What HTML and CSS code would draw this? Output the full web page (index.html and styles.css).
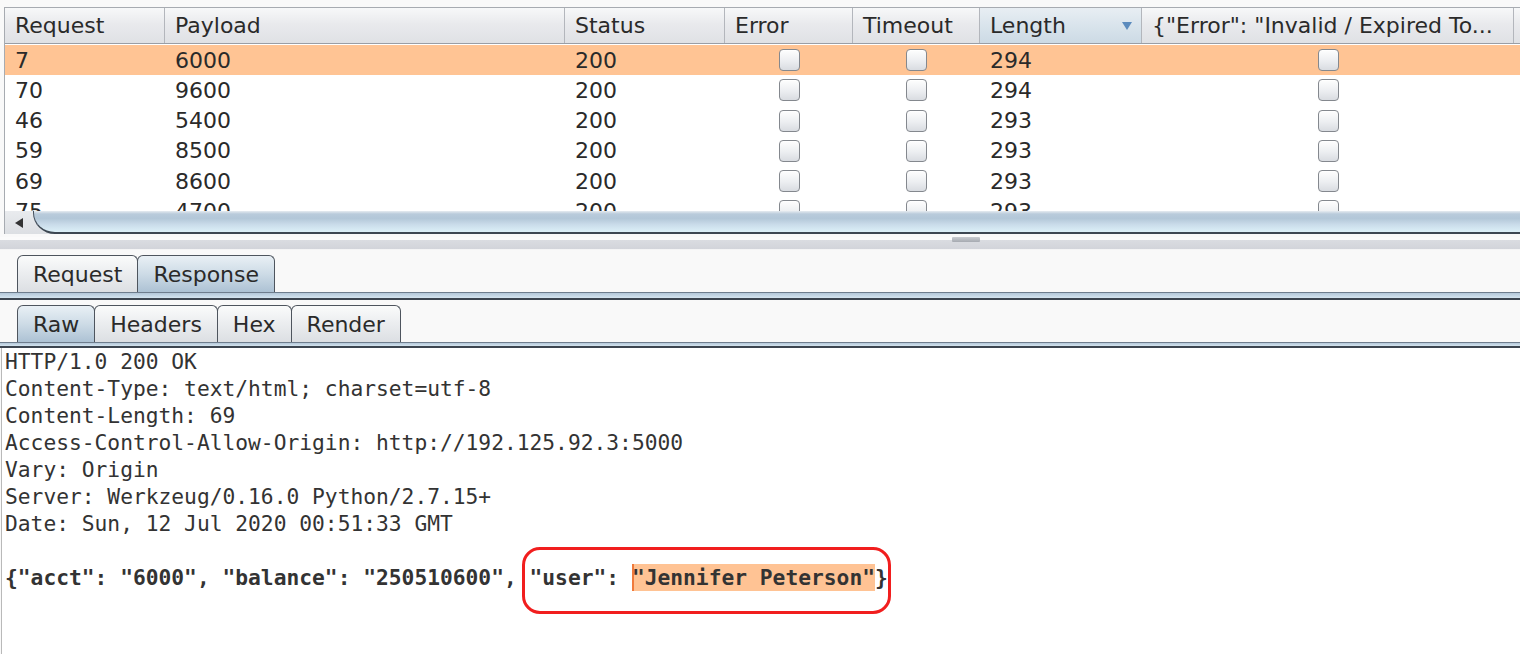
FILE: index.html
```html
<!DOCTYPE html>
<html>
<head>
<meta charset="utf-8">
<link rel="stylesheet" href="styles.css">
</head>
<body>
<div class="table-panel">
  <div class="grid-row thead">
    <div class="th">Request</div>
    <div class="th">Payload</div>
    <div class="th">Status</div>
    <div class="th">Error</div>
    <div class="th">Timeout</div>
    <div class="th sorted"><span>Length</span><svg class="sort" width="10" height="8" viewBox="0 0 10 8"><polygon points="0,0 10,0 5,8" fill="#5b8bbd"/></svg></div>
    <div class="th">{"Error": "Invalid / Expired To...</div>
    <div class="th"></div>
  </div>
  <div class="tbody">
    <div class="grid-row tr sel">
      <div class="td">7</div><div class="td">6000</div><div class="td">200</div>
      <div class="td chk"><span class="box"></span></div><div class="td chk"><span class="box"></span></div>
      <div class="td">294</div><div class="td chk"><span class="box"></span></div><div class="td"></div>
    </div>
    <div class="grid-row tr">
      <div class="td">70</div><div class="td">9600</div><div class="td">200</div>
      <div class="td chk"><span class="box"></span></div><div class="td chk"><span class="box"></span></div>
      <div class="td">294</div><div class="td chk"><span class="box"></span></div><div class="td"></div>
    </div>
    <div class="grid-row tr">
      <div class="td">46</div><div class="td">5400</div><div class="td">200</div>
      <div class="td chk"><span class="box"></span></div><div class="td chk"><span class="box"></span></div>
      <div class="td">293</div><div class="td chk"><span class="box"></span></div><div class="td"></div>
    </div>
    <div class="grid-row tr">
      <div class="td">59</div><div class="td">8500</div><div class="td">200</div>
      <div class="td chk"><span class="box"></span></div><div class="td chk"><span class="box"></span></div>
      <div class="td">293</div><div class="td chk"><span class="box"></span></div><div class="td"></div>
    </div>
    <div class="grid-row tr">
      <div class="td">69</div><div class="td">8600</div><div class="td">200</div>
      <div class="td chk"><span class="box"></span></div><div class="td chk"><span class="box"></span></div>
      <div class="td">293</div><div class="td chk"><span class="box"></span></div><div class="td"></div>
    </div>
    <div class="grid-row tr">
      <div class="td">75</div><div class="td">4700</div><div class="td">200</div>
      <div class="td chk"><span class="box"></span></div><div class="td chk"><span class="box"></span></div>
      <div class="td">293</div><div class="td chk"><span class="box"></span></div><div class="td"></div>
    </div>
  </div>
  <div class="hscroll">
    <div class="arrow"><svg width="10" height="10" viewBox="0 0 10 10"><polygon points="9,0 9,10 1,5" fill="#333"/></svg></div>
    <div class="thumb"></div>
  </div>
</div>
<div class="splitter"><div class="grip"></div></div>
<div class="tabs outer">
  <div class="tab">Request</div>
  <div class="tab active">Response</div>
</div>
<div class="strip"></div>
<div class="tabs inner">
  <div class="tab active">Raw</div>
  <div class="tab">Headers</div>
  <div class="tab">Hex</div>
  <div class="tab">Render</div>
</div>
<div class="strip thin"></div>
<div class="raw"><pre class="text">HTTP/1.0 200 OK
Content-Type: text/html; charset=utf-8
Content-Length: 69
Access-Control-Allow-Origin: http://192.125.92.3:5000
Vary: Origin
Server: Werkzeug/0.16.0 Python/2.7.15+
Date: Sun, 12 Jul 2020 00:51:33 GMT

<span class="json">{"acct": "6000", "balance": "250510600", "user": <span class="hl">"Jennifer Peterson"</span>}</span></pre>
<div class="annot"></div>
</div>
</body>
</html>
```
FILE: styles.css
```css
html, body {
  margin: 0;
  padding: 0;
}
body {
  width: 1520px;
  height: 654px;
  overflow: hidden;
  background: #f9f9f9;
  font-family: "DejaVu Sans", "Liberation Sans", sans-serif;
  color: #222;
}
.table-panel {
  margin: 7px 0 0 4px;
  border-top: 1px solid #a7abb1;
  border-left: 1px solid #a7abb1;
  background: #fff;
}
.grid-row {
  display: grid;
  grid-template-columns: 160px 400px 160px 128px 127px 162px 372px 1fr;
}
.thead {
  height: 35px;
  border-bottom: 1px solid #9a9ea5;
  background: linear-gradient(#f7f8f9, #e9eaed 45%, #dfe1e5);
}
.th {
  border-right: 1px solid #b3b6bc;
  padding: 0 10px;
  display: flex;
  align-items: center;
  font-size: 22px;
  color: #2a2a2a;
  white-space: nowrap;
  overflow: hidden;
}
.th.sorted {
  justify-content: space-between;
  padding-right: 9px;
  background: linear-gradient(#e8eef3, #d9e4ec 50%, #ccdae5);
}
.tbody {
  height: 166px;
  padding-top: 1px;
  overflow: hidden;
}
.tr {
  height: 30.25px;
  align-items: center;
  font-size: 22px;
  color: #2a2a2a;
}
.tr.sel {
  background: #ffc494;
}
.td {
  padding-left: 10px;
  white-space: nowrap;
}
.td.chk {
  padding-left: 0;
  display: flex;
  justify-content: center;
}
.box {
  width: 19px;
  height: 20px;
  border: 1px solid #84888e;
  border-radius: 4px;
  background: linear-gradient(#fefefe, #eceef1 55%, #d9dce1);
  box-shadow: inset 0 1px 0 #fff;
}
.hscroll {
  display: flex;
  height: 23px;
  background: linear-gradient(#e9ebee, #dcdfe3);
}
.arrow {
  width: 28px;
  display: flex;
  align-items: center;
  justify-content: center;
}
.thumb {
  flex: 1;
  border-left: 1px solid #45505d;
  border-bottom: 2px solid #3d4752;
  border-bottom-left-radius: 22px 21px;
  background: linear-gradient(#e6ebf0 0, #b9cbdb 3px, #b3c7d8 35%, #cadcea 65%, #dcf0f8 100%);
}
.splitter {
  height: 13px;
  padding-left: 952px;
  box-sizing: border-box;
  background: linear-gradient(#fbfbfb 0, #fbfbfb 3px, #dadce1 3px, #d2d4da 12px, #f4f4f5 12px);
}
.grip {
  width: 28px;
  height: 5px;
  margin-top: 3px;
  background: linear-gradient(#c9ccd1, #a6aab1);
  border-radius: 1px;
}
.tabs {
  display: flex;
  padding-left: 17px;
}
.tabs.outer {
  padding-top: 5px;
}
.tabs.inner {
  padding-top: 5px;
}
.tab {
  height: 36px;
  padding: 0 15px 0 15px;
  display: flex;
  align-items: center;
  font-size: 22px;
  border: 1px solid #4e555e;
  border-bottom: none;
  border-radius: 6px 6px 0 0;
  background: linear-gradient(#fafbfb, #eceef0 45%, #dcdfe3);
  margin-right: -1px;
  color: #2a2a2a;
}
.tab.active {
  background: linear-gradient(#e9f0f5, #cddbe6 50%, #adc2d4);
}
.strip {
  height: 8px;
  background: linear-gradient(#6e7d8d 0, #6e7d8d 1px, #b3c7d9 1px, #d5e5f0 6px, #3c4550 6px, #3c4550 8px);
}
.strip.thin {
  height: 6px;
  background: linear-gradient(#6e7d8d 0, #6e7d8d 1px, #b3c7d9 1px, #d5e5f0 4px, #3c4550 4px, #3c4550 6px);
}
.raw {
  position: relative;
  margin-left: 1px;
  border-left: 1px solid #b9b9b9;
  background: #fff;
  height: 320px;
}
.text {
  margin: 0;
  padding: 0 0 0 3px;
  font-family: "DejaVu Sans Mono", "Liberation Mono", monospace;
  font-size: 21.25px;
  line-height: 27px;
  color: #333;
}
.json {
  font-weight: bold;
}
.hl {
  display: inline-block;
  height: 27px;
  background: #ffc394;
  box-shadow: inset 2px 0 0 #f07a3c;
}
.annot {
  position: absolute;
  left: 520px;
  top: 199px;
  width: 369px;
  height: 67px;
  box-sizing: border-box;
  border: 3px solid #f11e1e;
  border-radius: 18px;
}
```
